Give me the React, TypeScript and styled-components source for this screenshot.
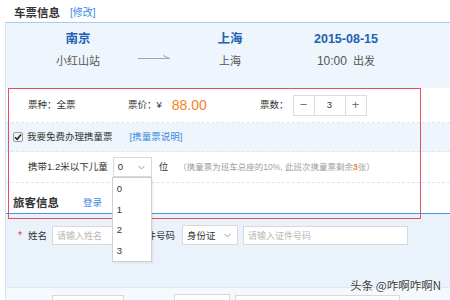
import React from 'react';
import styled, { createGlobalStyle } from 'styled-components';

const GlobalStyle = createGlobalStyle`
  html, body {
    margin: 0;
    padding: 0;
    background: #fff;
  }
  body {
    font-family: "Liberation Sans", "Noto Sans CJK SC", sans-serif;
    color: #333;
  }
`;

const Page = styled.div`
  position: relative;
  width: 450px;
  height: 300px;
  overflow: hidden;
  background: #fff;
`;

const SectionHeader = styled.div`
  display: flex;
  align-items: flex-end;
  height: 22px;
  padding: 0 0 2px 14px;
  box-sizing: border-box;
`;

const SectionTitle = styled.span`
  font-size: 11.5px;
  font-weight: bold;
  line-height: 14px;
  color: #333;
`;

const LinkText = styled.span<{ $gap?: number; $size?: number }>`
  margin-left: ${(p) => p.$gap ?? 10}px;
  font-size: ${(p) => p.$size ?? 10}px;
  line-height: 14px;
  color: #3c8be0;
`;

const Panel = styled.div`
  margin-left: 5px;
  border-top: 1px solid #a9cbea;
  border-left: 1px solid #d3e3f3;
  background: #eef5fc;
`;

const RouteRow = styled.div`
  display: flex;
  align-items: flex-start;
  height: 65px;
  padding: 8px 0 0 32px;
  box-sizing: border-box;
`;

const Stop = styled.div<{ $width: number; $gap?: number }>`
  display: flex;
  flex-direction: column;
  align-items: center;
  gap: 6px;
  width: ${(p) => p.$width}px;
  margin-left: ${(p) => p.$gap ?? 0}px;
`;

const StopName = styled.span`
  font-size: 12.5px;
  font-weight: bold;
  line-height: 16px;
  color: #2361b3;
  white-space: nowrap;
`;

const StopSub = styled.span`
  font-size: 11px;
  line-height: 16px;
  color: #555;
  white-space: nowrap;
`;

const TimeNum = styled.span`
  font-size: 12px;
`;

const ArrowBox = styled.div`
  margin: 15px 0 0 20px;
  width: 32px;
  height: 8px;
`;

const InfoRow = styled.div<{ $tint?: boolean; $height: number; $pad?: number }>`
  display: flex;
  align-items: center;
  height: ${(p) => p.$height}px;
  padding-left: ${(p) => p.$pad ?? 22}px;
  box-sizing: border-box;
  background: ${(p) => (p.$tint ? '#eef5fc' : '#fff')};
  border-bottom: 1px dashed #d9e6f3;
  font-size: 9.5px;
  line-height: 14px;
  color: #333;
  white-space: nowrap;
`;

const Cell = styled.div<{ $width?: number }>`
  display: flex;
  align-items: center;
  width: ${(p) => (p.$width ? `${p.$width}px` : 'auto')};
`;

const Price = styled.span`
  margin-left: 10px;
  font-size: 14px;
  line-height: 16px;
  color: #f5821f;
`;

const Stepper = styled.div`
  display: flex;
  margin-left: 4px;
  height: 21px;
  border: 1px solid #dcdcdc;
  box-sizing: border-box;
  background: #fff;
`;

const StepBtn = styled.div<{ $wide?: boolean }>`
  display: flex;
  align-items: center;
  justify-content: center;
  width: ${(p) => (p.$wide ? 30 : 20)}px;
  border-left: 1px solid #dcdcdc;
  font-size: ${(p) => (p.$wide ? 9.5 : 13)}px;
  color: ${(p) => (p.$wide ? '#333' : '#777')};
  &:first-child {
    border-left: none;
  }
`;

const CheckBox = styled.span`
  display: flex;
  align-items: center;
  justify-content: center;
  width: 10px;
  height: 10px;
  margin-right: 4px;
  border: 1px solid #9a9a9a;
  border-radius: 2px;
  box-sizing: border-box;
  background: #f4f4f4;
`;

const SelectWrap = styled.div<{ $width: number; $gap?: number }>`
  position: relative;
  display: flex;
  align-items: center;
  justify-content: space-between;
  width: ${(p) => p.$width}px;
  height: 20px;
  margin-left: ${(p) => p.$gap ?? 5}px;
  padding: 0 6px 0 4px;
  box-sizing: border-box;
  border: 1px solid #d9d9d9;
  background: #fff;
  font-size: 9.5px;
  color: #333;
`;

const DropList = styled.div`
  position: absolute;
  top: 19px;
  left: -2px;
  z-index: 3;
  width: 40px;
  padding-top: 1px;
  box-sizing: border-box;
  border: 1px solid #cfcfcf;
  background: #fff;
  box-shadow: 1px 1px 2px rgba(0, 0, 0, 0.08);
`;

const DropItem = styled.div`
  padding-left: 4px;
  height: 20.5px;
  line-height: 20.5px;
  font-size: 9.5px;
  color: #333;
`;

const Unit = styled.span`
  margin-left: 7px;
  font-size: 9.5px;
`;

const Note = styled.span`
  margin-left: 10px;
  font-size: 8.5px;
  color: #a0a0a0;
`;

const NoteNum = styled.b`
  color: #f5821f;
`;

const PassengerHeader = styled.div`
  display: flex;
  align-items: flex-start;
  height: 31px;
  padding: 13px 0 0 7px;
  box-sizing: border-box;
  background: #fff;
  border-bottom: 1px solid #4f94da;
`;

const FormArea = styled.div<{ $light?: boolean; $height: number }>`
  height: ${(p) => p.$height}px;
  padding: ${(p) => (p.$light ? 6 : 11)}px 0 0 12px;
  box-sizing: border-box;
  background: ${(p) => (p.$light ? '#f5f9fd' : '#eaf3fc')};
  border-bottom: 1px solid #dfe8f1;
`;

const FormRow = styled.div`
  display: flex;
  align-items: center;
  height: 20px;
  font-size: 9.5px;
  color: #333;
  white-space: nowrap;
`;

const Required = styled.span`
  width: 10px;
  color: #e0333f;
  font-size: 10px;
`;

const FieldLabel = styled.span<{ $gap?: number; $width: number }>`
  width: ${(p) => p.$width}px;
  margin-left: ${(p) => p.$gap ?? 0}px;
`;

const TextInput = styled.div<{ $width: number; $gap?: number }>`
  display: flex;
  align-items: center;
  width: ${(p) => p.$width}px;
  height: 19px;
  margin-left: ${(p) => p.$gap ?? 5}px;
  padding-left: 4px;
  box-sizing: border-box;
  border: 1px solid #d9d9d9;
  background: #fff;
  font-size: 9px;
  color: #b8b8b8;
`;

const Annotation = styled.div`
  position: absolute;
  left: 8px;
  top: 88px;
  width: 413px;
  height: 131px;
  box-sizing: border-box;
  border: 1px solid #e0535e;
  pointer-events: none;
  z-index: 2;
`;

const Watermark = styled.div`
  position: absolute;
  right: 9px;
  top: 277px;
  z-index: 4;
  font-size: 11.5px;
  line-height: 16px;
  color: #3a3a3a;
  text-shadow: 0 0 2px #fff, 0 0 2px #fff;
  font-family: "Noto Sans CJK SC", sans-serif;
`;

const Chevron = () => (
  <svg width="7" height="5" viewBox="0 0 7 5">
    <polyline points="0.5,1 3.5,4 6.5,1" fill="none" stroke="#999" strokeWidth="1" />
  </svg>
);

const Check = () => (
  <svg width="8" height="8" viewBox="0 0 8 8">
    <polyline points="1,4.2 3.2,6.3 7,1.5" fill="none" stroke="#222" strokeWidth="1.5" />
  </svg>
);

const Arrow = () => (
  <svg width="32" height="8" viewBox="0 0 32 8">
    <line x1="0" y1="6.5" x2="32" y2="6.5" stroke="#9aa6b2" strokeWidth="1" />
    <line x1="25" y1="3.5" x2="31.5" y2="6.5" stroke="#9aa6b2" strokeWidth="1" />
  </svg>
);

export default function App() {
  return (
    <Page>
      <GlobalStyle />
      <SectionHeader>
        <SectionTitle>车票信息</SectionTitle>
        <LinkText>[修改]</LinkText>
      </SectionHeader>

      <Panel>
        <RouteRow>
          <Stop $width={80}>
            <StopName>南京</StopName>
            <StopSub>小红山站</StopSub>
          </Stop>
          <ArrowBox>
            <Arrow />
          </ArrowBox>
          <Stop $width={60} $gap={30}>
            <StopName>上海</StopName>
            <StopSub>上海</StopSub>
          </Stop>
          <Stop $width={80} $gap={46}>
            <StopName>2015-08-15</StopName>
            <StopSub>
              <TimeNum>10:00</TimeNum>&nbsp; 出发
            </StopSub>
          </Stop>
        </RouteRow>

        <InfoRow $height={35}>
          <Cell $width={100}>票种：全票</Cell>
          <Cell $width={132}>
            票价：¥<Price>88.00</Price>
          </Cell>
          <Cell>
            票数：
            <Stepper>
              <StepBtn>−</StepBtn>
              <StepBtn $wide>3</StepBtn>
              <StepBtn>+</StepBtn>
            </Stepper>
          </Cell>
        </InfoRow>

        <InfoRow $tint $height={29} $pad={7}>
          <CheckBox>
            <Check />
          </CheckBox>
          我要免费办理携童票
          <LinkText $gap={17} $size={9.5}>[携童票说明]</LinkText>
        </InfoRow>

        <InfoRow $height={31}>
          携带1.2米以下儿童
          <SelectWrap $width={39}>
            0
            <Chevron />
            <DropList>
              {['0', '1', '2', '3'].map((n) => (
                <DropItem key={n}>{n}</DropItem>
              ))}
            </DropList>
          </SelectWrap>
          <Unit>位</Unit>
          <Note>
            （携童票为班车总座的10%, 此班次携童票剩余<NoteNum>3</NoteNum>张）
          </Note>
        </InfoRow>

        <PassengerHeader>
          <SectionTitle>旅客信息</SectionTitle>
          <LinkText $gap={24} $size={9.5}>登录</LinkText>
        </PassengerHeader>

        <FormArea $height={74}>
          <FormRow>
            <Required>*</Required>
            <FieldLabel $width={19}>姓名</FieldLabel>
            <TextInput $width={80}>请输入姓名</TextInput>
            <FieldLabel $width={40} $gap={5}>证件号码</FieldLabel>
            <SelectWrap $width={56}>
              身份证
              <Chevron />
            </SelectWrap>
            <TextInput $width={165}>请输入证件号码</TextInput>
          </FormRow>
        </FormArea>

        <FormArea $light $height={30}>
          <FormRow>
            <Required />
            <FieldLabel $width={19} />
            <TextInput $width={72} />
            <FieldLabel $width={40} $gap={5} />
            <SelectWrap $width={56} />
            <TextInput $width={165} />
          </FormRow>
        </FormArea>
      </Panel>

      <Annotation />
      <Watermark>头条 @咋啊咋啊N</Watermark>
    </Page>
  );
}
